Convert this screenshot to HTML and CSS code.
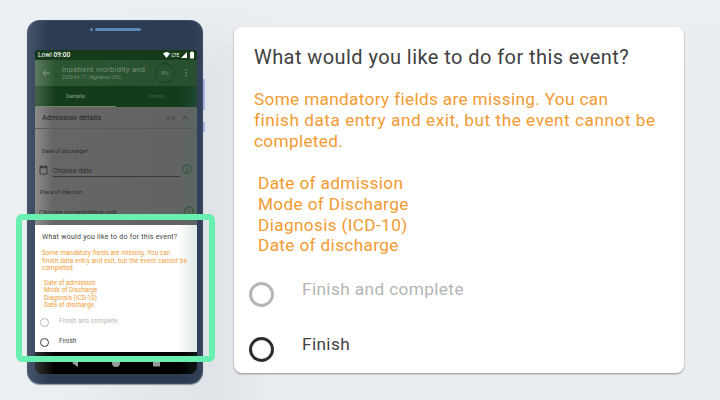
FILE: index.html
```html
<!DOCTYPE html>
<html lang="en">
  <head>
    <meta charset="UTF-8" />
    <meta name="viewport" content="width=device-width, initial-scale=1.0" />
    <title>Finish event</title>
    <link rel="stylesheet" href="styles.css">
  </head>
  <body>
    <div class="phone">
      <div class="speaker"><i class="dot"></i><i class="bar"></i></div>
      <div class="side-buttons"><i class="power"></i><i class="volume"></i></div>

      <div class="screen">
        <div class="status">
          <span>Lowi <b>09:00</b></span>
          <svg class="status-icons" width="32" height="8" viewBox="0 0 32 8">
            <path d="M0 2.5Q3.5-.5 7 2.5L3.5 7Z" />
            <text x="8.5" y="6.3">LTE</text>
            <path d="M24 1v6h-6Z" />
            <path d="M27 1.2h1V.5h2v.7h1V7.5h-4Z" />
          </svg>
        </div>

        <div class="appbar">
          <svg class="back" width="8" height="8" viewBox="0 0 8 8"><path d="M7.5 4H1M4 1L1 4l3 3" /></svg>
          <div class="heading">
            <div class="name">Inpatient morbidity and</div>
            <div class="sub">2020-04-17 | Ngelehun CHC</div>
          </div>
          <div class="progress">8%</div>
          <svg class="more" width="4" height="10" viewBox="0 0 4 10"><circle cx="2" cy="2" r=".8" /><circle cx="2" cy="5" r=".8" /><circle cx="2" cy="8" r=".8" /></svg>
        </div>

        <div class="tabs">
          <div class="tab active">Details</div>
          <div class="tab">Notes</div>
        </div>

        <div class="form">
          <div class="section">
            <span class="section-name">Admission details</span>
            <span class="count">0/6</span>
            <svg width="6" height="5" viewBox="0 0 6 5"><path d="M.8 4L3 1.5 5.2 4" /></svg>
          </div>
          <div class="label date-label">Date of discharge*</div>
          <div class="field">
            <svg class="calendar" width="9" height="10" viewBox="0 0 9 10"><path d="M1 1.7h7V9H1ZM1 2.7h7M2.5 0v2M6.5 0v2" /></svg>
            <span class="input">Choose date</span>
            <svg class="info" width="10" height="10" viewBox="0 0 10 10"><circle cx="5" cy="5" r="4.2" /><path d="M5 4.5V7.3M5 2.7v.8" /></svg>
          </div>
          <div class="label place-label">Place of Infection</div>
          <div class="field unit">
            <span class="input">Choose organisation unit</span>
            <svg class="info" width="10" height="10" viewBox="0 0 10 10"><circle cx="5" cy="5" r="4.2" /><path d="M5 4.5V7.3M5 2.7v.8" /></svg>
          </div>
        </div>

        <div class="sheet">
          <div class="title">What would you like to do for this event?</div>
          <div class="warning">Some mandatory fields are missing. You can<br><span class="wide">finish data entry and exit, but the event cannot be</span><br>completed.</div>
          <div class="missing">Date of admission<br>Mode of Discharge<br>Diagnosis (ICD-10)<br>Date of discharge</div>
          <div class="option disabled"><i class="radio"></i><span>Finish and complete</span></div>
          <div class="option"><i class="radio"></i><span>Finish</span></div>
        </div>

        <div class="navbar">
          <svg width="162" height="22" viewBox="0 0 162 22"><path d="M37 11l6-4v8Z" /><circle cx="81" cy="11" r="4" /><path d="M118 7h7v7.5h-7Z" /></svg>
        </div>
      </div>

      <div class="highlight"></div>
    </div>

    <div class="card">
      <div class="title">What would you like to do for this event?</div>
      <div class="warning">Some mandatory fields are missing. You can<br><span class="wide">finish data entry and exit, but the event cannot be</span><br>completed.</div>
      <div class="missing">Date of admission<br>Mode of Discharge<br>Diagnosis (ICD-10)<br>Date of discharge</div>
      <div class="option disabled"><i class="radio"></i><span>Finish and complete</span></div>
      <div class="option"><i class="radio"></i><span>Finish</span></div>
    </div>
  </body>
</html>
```

FILE: styles.css
```css
:root {
  --orange: #f39a31;
  --text: #414141;
  --muted: #b5b5b5;
  --mint: #69efb0;
}

* {
  box-sizing: border-box;
}

body {
  margin: 0;
  width: 720px;
  height: 400px;
  overflow: hidden;
  display: flex;
  align-items: flex-start;
  gap: 31px;
  padding: 20px 0 0 27px;
  font-family: Roboto, "Liberation Sans", sans-serif;
  background:
    linear-gradient(180deg, #ebeff2 10px, rgba(235, 239, 242, 0) 75px),
    linear-gradient(90deg, #ebeff2 0, #ebeff2 60px, #dfe4e8 210px, #e2e6ea 235px, #eaeef1 270px);
  white-space: nowrap;
}

svg {
  display: block;
  flex: none;
}

/* phone */
.phone {
  position: relative;
  flex: none;
  width: 176px;
  height: 364px;
  padding: 30px 6px 0 8px;
  border-radius: 13px;
  background: linear-gradient(90deg, #46546b 0, #2c3b50 22px, #2c3b50 160px, #33425a 100%);
  box-shadow: inset 0 0 2px #65728a, 0 1px 1px #8d939b;
}

.speaker {
  position: absolute;
  top: 8px;
  left: 63px;
  display: flex;
  gap: 2px;
}
.speaker i {
  height: 2.5px;
  border-radius: 2px;
  background: #5c86b8;
}
.speaker .dot {
  width: 3px;
}
.speaker .bar {
  width: 46px;
}

.side-buttons {
  position: absolute;
  top: 59px;
  right: -2px;
}
.side-buttons i {
  display: block;
  width: 2px;
  background: #a9b4e0;
}
.side-buttons .power {
  height: 31px;
  margin-bottom: 12px;
}
.side-buttons .volume {
  height: 10px;
}

.screen {
  width: 162px;
  height: 324px;
  border-radius: 4px 4px 8px 8px;
  overflow: hidden;
  background: #000;
}

.status {
  height: 10px;
  display: flex;
  align-items: center;
  justify-content: space-between;
  padding: 0 2px 0 3px;
  font-size: 6.6px;
  color: #fff;
  background: #153b1b;
}
.status b {
  font-weight: 500;
}
.status-icons {
  fill: #fff;
  font-size: 5px;
}

.appbar {
  height: 26px;
  display: flex;
  align-items: center;
  padding: 0 9px 0 7px;
  color: #7b917d;
  background: linear-gradient(90deg, #5d7a60 0, #2b5530 20px, #285030 100%);
}
.back {
  stroke: #8b9c8c;
  fill: none;
}
.heading {
  width: 93px;
  margin-left: 12px;
}
.name {
  font-size: 7.4px;
  line-height: 9px;
  letter-spacing: 0.32px;
}
.sub {
  font-size: 4.5px;
  line-height: 7px;
  letter-spacing: 0.15px;
}
.progress {
  width: 20px;
  height: 20px;
  border: 1px solid #173d1c;
  border-radius: 50%;
  font-size: 5.4px;
  line-height: 18px;
  text-align: center;
}
.more {
  margin-left: auto;
  fill: #7e957f;
}

.tabs {
  height: 21px;
  display: flex;
  font-size: 6.2px;
  line-height: 20px;
  text-align: center;
  background: linear-gradient(90deg, #456549 0, #153c1a 20px, #153c1a 145px, #204733 100%);
}
.tab {
  width: 50%;
  color: #3d6341;
}
.tab.active {
  color: #8aa08c;
  border-bottom: 1px solid #71856f;
}

.form {
  height: 118px;
  overflow: hidden;
  color: #2c2c2c;
  background: linear-gradient(90deg, #8c8c8c 0, #666 18px, #636363 140px, #5b6766 100%);
}
.form svg {
  fill: none;
  stroke: #333;
  stroke-width: 0.9;
}
.section {
  height: 22px;
  display: flex;
  align-items: center;
  padding: 0 9px 0 7px;
  font-size: 7px;
  letter-spacing: 0.2px;
  color: #1c1c1c;
  border-bottom: 1px solid #5b5b5b;
}
.count {
  margin: 0 7px 0 auto;
  font-size: 5.4px;
  color: #404040;
}
.label {
  font-size: 5.4px;
  line-height: 6px;
}
.date-label {
  margin: 19px 0 0 7px;
  letter-spacing: 0.1px;
}
.place-label {
  margin: 12px 0 0 5px;
}
.field {
  display: flex;
  align-items: center;
  height: 14px;
  margin: 9px 5px 0 4px;
  font-size: 6.8px;
}
.field .input {
  width: 127px;
  height: 14px;
  line-height: 17px;
  margin-left: 5px;
  letter-spacing: 0.1px;
  border-bottom: 1px solid #3b3b3b;
}
.field .info {
  margin-left: auto;
  margin-top: -3px;
  stroke: #225127;
}
.field.unit {
  margin: 10px 3px 0 4px;
}
.unit .input {
  margin-left: 0;
  border: 0;
}

/* dialog: bottom sheet on the phone */
.sheet {
  height: 127px;
  padding: 7px 0 0 7px;
  background: linear-gradient(90deg, #fff 0, #fff 142px, #e0e9e7 100%);
}
.title {
  color: var(--text);
}
.warning,
.missing {
  color: var(--orange);
}
.option {
  display: flex;
  color: var(--text);
}
.option.disabled {
  color: var(--muted);
}
.radio {
  flex: none;
  border-radius: 50%;
  border-style: solid;
}
.sheet .title {
  font-size: 7px;
  line-height: 10px;
  letter-spacing: 0.25px;
}
.sheet .warning {
  margin-top: 8px;
  font-size: 6.3px;
  line-height: 7.5px;
  letter-spacing: 0.09px;
}
.sheet .wide {
  letter-spacing: 0.16px;
}
.sheet .missing {
  margin: 7px 0 0 2px;
  font-size: 6.3px;
  line-height: 7.6px;
  letter-spacing: 0.03px;
}
.sheet .option {
  gap: 10px;
  height: 20px;
  margin-left: -2px;
  padding-top: 7px;
  font-size: 6.3px;
  line-height: 8px;
  letter-spacing: 0.12px;
}
.sheet .radio {
  width: 9px;
  height: 9px;
  margin-top: 1px;
  border-width: 1px;
}

.navbar {
  height: 22px;
  background: linear-gradient(90deg, #333 0, #000 20px, #000 145px, #101716 100%);
}
.navbar svg {
  fill: #999;
}

.highlight {
  position: absolute;
  left: -11px;
  top: 194px;
  width: 199px;
  height: 148px;
  border: 6px solid var(--mint);
  border-radius: 6px;
}

/* enlarged dialog */
.card {
  width: 450px;
  height: 346px;
  margin-top: 7px;
  padding: 17px 0 0 20px;
  border-radius: 8px;
  background: #fff;
  box-shadow: 0 1px 2px rgba(0, 0, 0, 0.4);
}
.card .title {
  font-size: 20px;
  line-height: 26px;
  letter-spacing: 0.43px;
}
.card .warning {
  margin-top: 19px;
  font-size: 17.2px;
  line-height: 21px;
  letter-spacing: 0.34px;
}
.card .wide {
  letter-spacing: 0.54px;
}
.card .missing {
  margin: 21px 0 0 4px;
  font-size: 17.2px;
  line-height: 20.8px;
  letter-spacing: 0.36px;
}
.card .option {
  gap: 28px;
  height: 55px;
  margin-left: -5px;
  font-size: 17.2px;
  line-height: 19px;
  letter-spacing: 0.4px;
}
.card .missing + .option {
  margin-top: 24px;
}
.card .radio {
  width: 25px;
  height: 25px;
  margin-top: 2px;
  border-width: 3px;
}
.card .option:last-child .radio {
  border-color: #2d2d2d;
}
```
